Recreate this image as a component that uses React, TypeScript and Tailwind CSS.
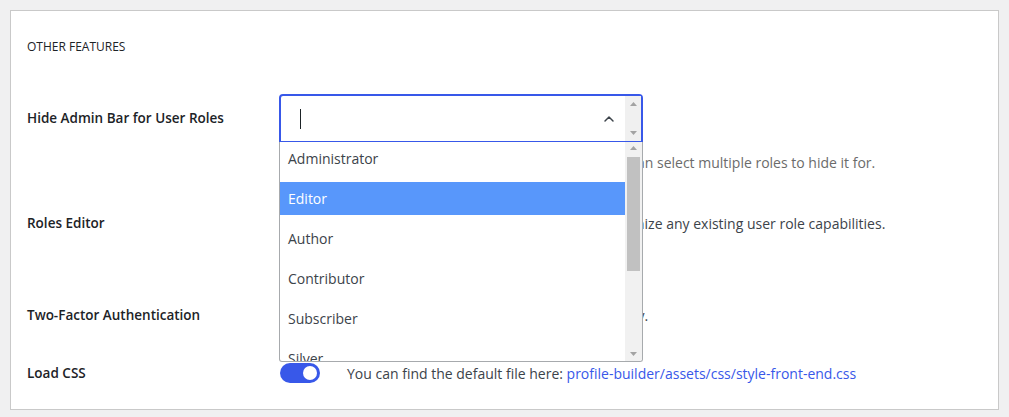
import { ChevronUp } from "lucide-react";

const roles = ["Administrator", "Editor", "Author", "Contributor", "Subscriber", "Silver"];

function Toggle() {
  return (
    <div className="flex h-5 w-10 shrink-0 items-center justify-end rounded-full bg-[#3858e9] px-[3px]">
      <div className="h-[14px] w-[14px] rounded-full bg-white" />
    </div>
  );
}

function Arrow({ up }: { up?: boolean }) {
  return (
    <svg width="7" height="4" viewBox="0 0 7 4" className="fill-[#a3a3a3]">
      {up ? <path d="M0 4 L3.5 0 L7 4 Z" /> : <path d="M0 0 L3.5 4 L7 0 Z" />}
    </svg>
  );
}

function RolesSelect() {
  return (
    <div className="relative w-[364px]">
      <div className="flex h-[48px] items-stretch rounded-t-[4px] border-2 border-b border-[#3858e9] bg-white">
        <div className="flex flex-1 items-center pl-[19px]">
          <div className="h-[20px] w-px bg-[#1d2327]" />
        </div>
        <div className="flex items-center pr-[8px]">
          <ChevronUp size={16} strokeWidth={2.2} className="text-[#3c434a]" />
        </div>
        <div className="flex w-[16px] flex-col items-center justify-between bg-[#f0f0f0] py-[6px]">
          <Arrow up />
          <Arrow />
        </div>
      </div>
      <div className="absolute left-0 top-full z-10 flex h-[220px] w-full overflow-hidden rounded-b-[3px] border border-t-0 border-[#a7aaad] bg-white">
        <ul className="flex-1">
          {roles.map((r) => (
            <li
              key={r}
              className={`mb-[7px] flex h-[33px] items-center pl-[8px] text-[14px] ${
                r === "Editor" ? "bg-[#5897fb] text-white" : "text-[#3c434a]"
              }`}
            >
              {r}
            </li>
          ))}
        </ul>
        <div className="flex w-[17px] flex-col items-center bg-[#f1f1f1] pb-[5px] pt-[4px]">
          <Arrow up />
          <div className="mt-[7px] h-[114px] w-[13px] bg-[#c1c1c1]" />
          <div className="flex-1" />
          <Arrow />
        </div>
      </div>
    </div>
  );
}

export default function App() {
  return (
    <div
      className="h-[417px] w-[1009px] bg-[#f0f0f1] px-[10px] pt-[10px]"
      style={{ fontFamily: '"Open Sans", "Noto Sans", sans-serif' }}
    >
      <div className="h-[400px] w-[989px] border border-[#c9c9c9] bg-white pl-[16px]">
        <div className="flex h-[72px] items-center text-[12px] font-medium text-[#1d2327]">OTHER FEATURES</div>

        <div className="mt-[11px] flex items-center">
          <div className="w-[252px] text-[13.5px] font-semibold text-[#1d2327]">Hide Admin Bar for User Roles</div>
          <RolesSelect />
        </div>
        <div className="ml-[252px] mt-[11px] h-[20px] whitespace-nowrap text-[14px] leading-[20px] text-[#6b6b6b]">
          Choose which user roles see the admin bar. Here you can select multiple roles to hide it for.
        </div>

        <div className="mt-[40px] flex h-[20px] items-center">
          <div className="w-[253px] text-[13.5px] font-semibold text-[#1d2327]">Roles Editor</div>
          <Toggle />
          <div className="ml-[27px] whitespace-nowrap text-[14px] text-[#3c434a]">
            Edit existing roles, add new roles, and customize any existing user role capabilities.
          </div>
        </div>

        <div className="mt-[72px] flex h-[20px] items-center">
          <div className="w-[253px] text-[13.5px] font-semibold text-[#1d2327]">Two-Factor Authentication</div>
          <Toggle />
          <div className="ml-[27px] whitespace-nowrap text-[14px] tracking-[-0.15px] text-[#3c434a]">
            Enable Two-Factor Authentication functionality.
          </div>
        </div>

        <div className="mt-[38px] flex h-[20px] items-center">
          <div className="w-[253px] text-[13.5px] font-semibold text-[#1d2327]">Load CSS</div>
          <Toggle />
          <div className="ml-[27px] text-[14px] text-[#3c434a]">
            You can find the default file here:{" "}
            <span className="text-[#3858e9]">profile-builder/assets/css/style-front-end.css</span>
          </div>
        </div>
      </div>
    </div>
  );
}
